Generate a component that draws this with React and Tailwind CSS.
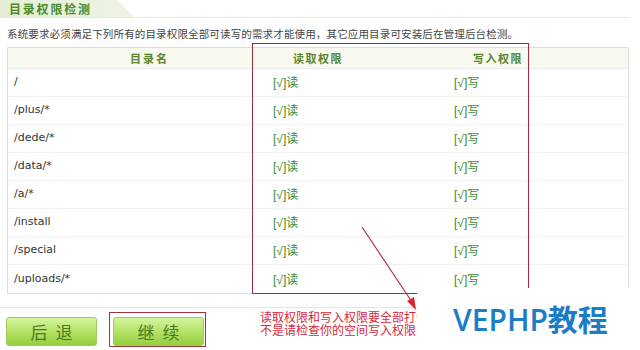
import React from "react";

const rows = ["/", "/plus/*", "/dede/*", "/data/*", "/a/*", "/install", "/special", "/uploads/*"];

export default function App() {
  return (
    <div className="relative w-[640px] h-[350px] overflow-hidden bg-white" style={{ fontFamily: '"Noto Sans CJK SC", "DejaVu Sans", sans-serif' }}>
      {/* title bar */}
      <div className="h-[18px] border-b border-[#e6e9e0] w-[630px] flex items-stretch">
        <div className="w-[134px] bg-gradient-to-r from-[#e4eed4] to-[#eef4e4] [clip-path:polygon(0_0,118px_0,134px_100%,0_100%)] flex items-center pl-[9px]">
          <span className="text-[12px] font-bold tracking-[1.8px] text-[#4d8a2e] leading-none">目录权限检测</span>
        </div>
      </div>

      {/* description */}
      <div className="mt-[9px] ml-[7px] text-[10.5px] tracking-[0.15px] leading-[14px] text-[#444] whitespace-nowrap">
        系统要求必须满足下列所有的目录权限全部可读写的需求才能使用，其它应用目录可安装后在管理后台检测。
      </div>

      {/* table */}
      <div className="mt-[6px] ml-[7px] w-[622px] border border-[#dedede]">
        <div className="h-[21px] bg-[#f7f9ee] border-b border-[#ececec] grid grid-cols-[258px_180px_1fr] items-center text-[11px] font-bold tracking-[1.5px] text-[#5b8330]">
          <div className="pl-[122px] tracking-[2px]">目录名</div>
          <div className="pl-[27px]">读取权限</div>
          <div className="pl-[27px]">写入权限</div>
        </div>
        {rows.map((r, i) => (
          <div key={r} className={"h-[28px] grid grid-cols-[258px_180px_1fr] items-center " + (i < rows.length - 1 ? "border-b border-[#f0f0f0]" : "")}>
            <div className="pl-[6px] text-[11px] text-[#333]" style={{ fontFamily: '"DejaVu Sans", sans-serif' }}>{r}</div>
            <div className="pl-[7px] text-[12px] text-[#3d8a2e]">
              <span style={{ fontFamily: '"Liberation Sans", sans-serif' }}>[√]</span>读
            </div>
            <div className="pl-[8px] text-[12px] text-[#3d8a2e]">
              <span style={{ fontFamily: '"Liberation Sans", sans-serif' }}>[√]</span>写
            </div>
          </div>
        ))}
      </div>

      {/* separator */}
      <div className="mt-[13px] h-px w-[640px] bg-[#e4e4e4]" />

      {/* buttons row */}
      <div className="mt-[4px] flex items-start">
        <div className="ml-[6px] mt-[5px] w-[91px] h-[29px] rounded-[3px] border border-[#9ccc5c] bg-gradient-to-b from-[#d4f59c] via-[#b4e266] to-[#94cf3e] flex items-center justify-center text-[17px] tracking-[8px] pl-[8px] text-[#4b7b22]">
          后退
        </div>
        <div className="ml-[12px] w-[97px] h-[35px] border-[1.5px] border-[#9a3440] pt-[4px] pl-[3px]">
          <div className="w-[91px] h-[29px] rounded-[3px] border border-[#9ccc5c] bg-gradient-to-b from-[#d4f59c] via-[#b4e266] to-[#94cf3e] flex items-center justify-center text-[17px] tracking-[8px] pl-[8px] text-[#4b7b22]">
            继续
          </div>
        </div>
        <div className="ml-[54px] -mt-[2px] text-[12px] leading-[13px] text-[#d42a3c] whitespace-nowrap">
          <div>读取权限和写入权限要全部打勾</div>
          <div>不是请检查你的空间写入权限</div>
        </div>
      </div>

      {/* red annotation box */}
      <div className="absolute left-[252px] top-[43px] w-[277px] h-[251px] border-[1.5px] border-[#a52a3c]" />

      {/* arrow */}
      <svg className="absolute left-0 top-0" width="640" height="350" viewBox="0 0 640 350">
        <line x1="362" y1="227" x2="412" y2="302" stroke="#a83848" strokeWidth="1.2" />
        <polygon points="416,310 407,301 414,297" fill="#e0202c" />
      </svg>

      {/* watermark box */}
      <div className="absolute left-[417px] top-[288px] w-[223px] h-[62px] bg-white flex items-center pl-[36px] pt-[2px]">
        <span className="text-[30px] font-semibold text-[#1c7dc6] leading-none" style={{ fontFamily: '"Open Sans", "Noto Sans CJK SC", sans-serif' }}>VEPHP教程</span>
      </div>
    </div>
  );
}
